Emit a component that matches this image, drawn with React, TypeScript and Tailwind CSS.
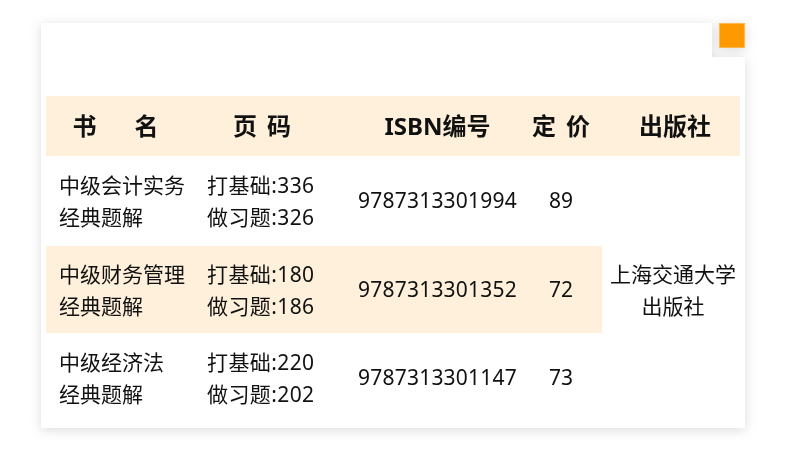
import React from "react";

const rows = [
  { name: ["中级会计实务", "经典题解"], pages: ["打基础:336", "做习题:326"], isbn: "9787313301994", price: "89", hl: false },
  { name: ["中级财务管理", "经典题解"], pages: ["打基础:180", "做习题:186"], isbn: "9787313301352", price: "72", hl: true },
  { name: ["中级经济法", "经典题解"], pages: ["打基础:220", "做习题:202"], isbn: "9787313301147", price: "73", hl: false },
];

export default function App() {
  return (
    <div
      className="w-[790px] h-[474px] bg-white pt-[23px] pl-[41px] text-[#111]"
      style={{ fontFamily: '"Noto Sans", "Noto Sans CJK SC", sans-serif' }}
    >
      <div className="relative w-[704px] h-[405px] [filter:drop-shadow(0_2px_6px_rgba(0,0,0,0.14))]">
        <div className="w-full h-full bg-white pt-[73px] px-[5px] [clip-path:polygon(0_0,671px_0,671px_34px,100%_34px,100%_100%,0_100%)]">
          <div className="grid grid-cols-[139px_170px_165px_82px_138px] grid-rows-[60px_90px_87px_90px]">
            {/* header */}
            <div className="bg-[#fef0da] flex items-center justify-center gap-[38px] text-[24px] font-bold">
              <span>书</span>
              <span>名</span>
            </div>
            <div className="bg-[#fef0da] flex items-center justify-center gap-[10px] pr-4 text-[24px] font-bold">
              <span>页</span>
              <span>码</span>
            </div>
            <div className="bg-[#fef0da] flex items-center justify-center text-[24px] font-bold">
              ISBN编号
            </div>
            <div className="bg-[#fef0da] flex items-center justify-center gap-[10px] text-[24px] font-bold">
              <span>定</span>
              <span>价</span>
            </div>
            <div className="bg-[#fef0da] flex items-center justify-center pl-2 text-[24px] font-bold">
              出版社
            </div>
            {rows.map((r, i) => (
              <React.Fragment key={i}>
                <div className={`flex flex-col justify-center pl-[13px] text-[21px] leading-[32px] whitespace-nowrap ${r.hl ? "bg-[#fef0da]" : ""}`}>
                  <span>{r.name[0]}</span>
                  <span>{r.name[1]}</span>
                </div>
                <div className={`flex flex-col justify-center pl-[22px] text-[21px] leading-[32px] tracking-[0.4px] whitespace-nowrap ${r.hl ? "bg-[#fef0da]" : ""}`}>
                  <span>{r.pages[0]}</span>
                  <span>{r.pages[1]}</span>
                </div>
                <div className={`flex items-center justify-center text-[21px] tracking-[0.2px] ${r.hl ? "bg-[#fef0da]" : ""}`}>
                  {r.isbn}
                </div>
                <div className={`flex items-center justify-center text-[21px] ${r.hl ? "bg-[#fef0da]" : ""}`}>
                  {r.price}
                </div>
                {i === 0 && (
                  <div className="row-span-3 flex flex-col items-center justify-center pl-1 text-[21px] leading-[32px]">
                    <span>上海交通大学</span>
                    <span>出版社</span>
                  </div>
                )}
              </React.Fragment>
            ))}
          </div>
        </div>
        <div className="absolute left-[678px] top-0 w-[26px] h-[25px] bg-[#ff9900] border border-[#ffb84d]" />
      </div>
    </div>
  );
}
